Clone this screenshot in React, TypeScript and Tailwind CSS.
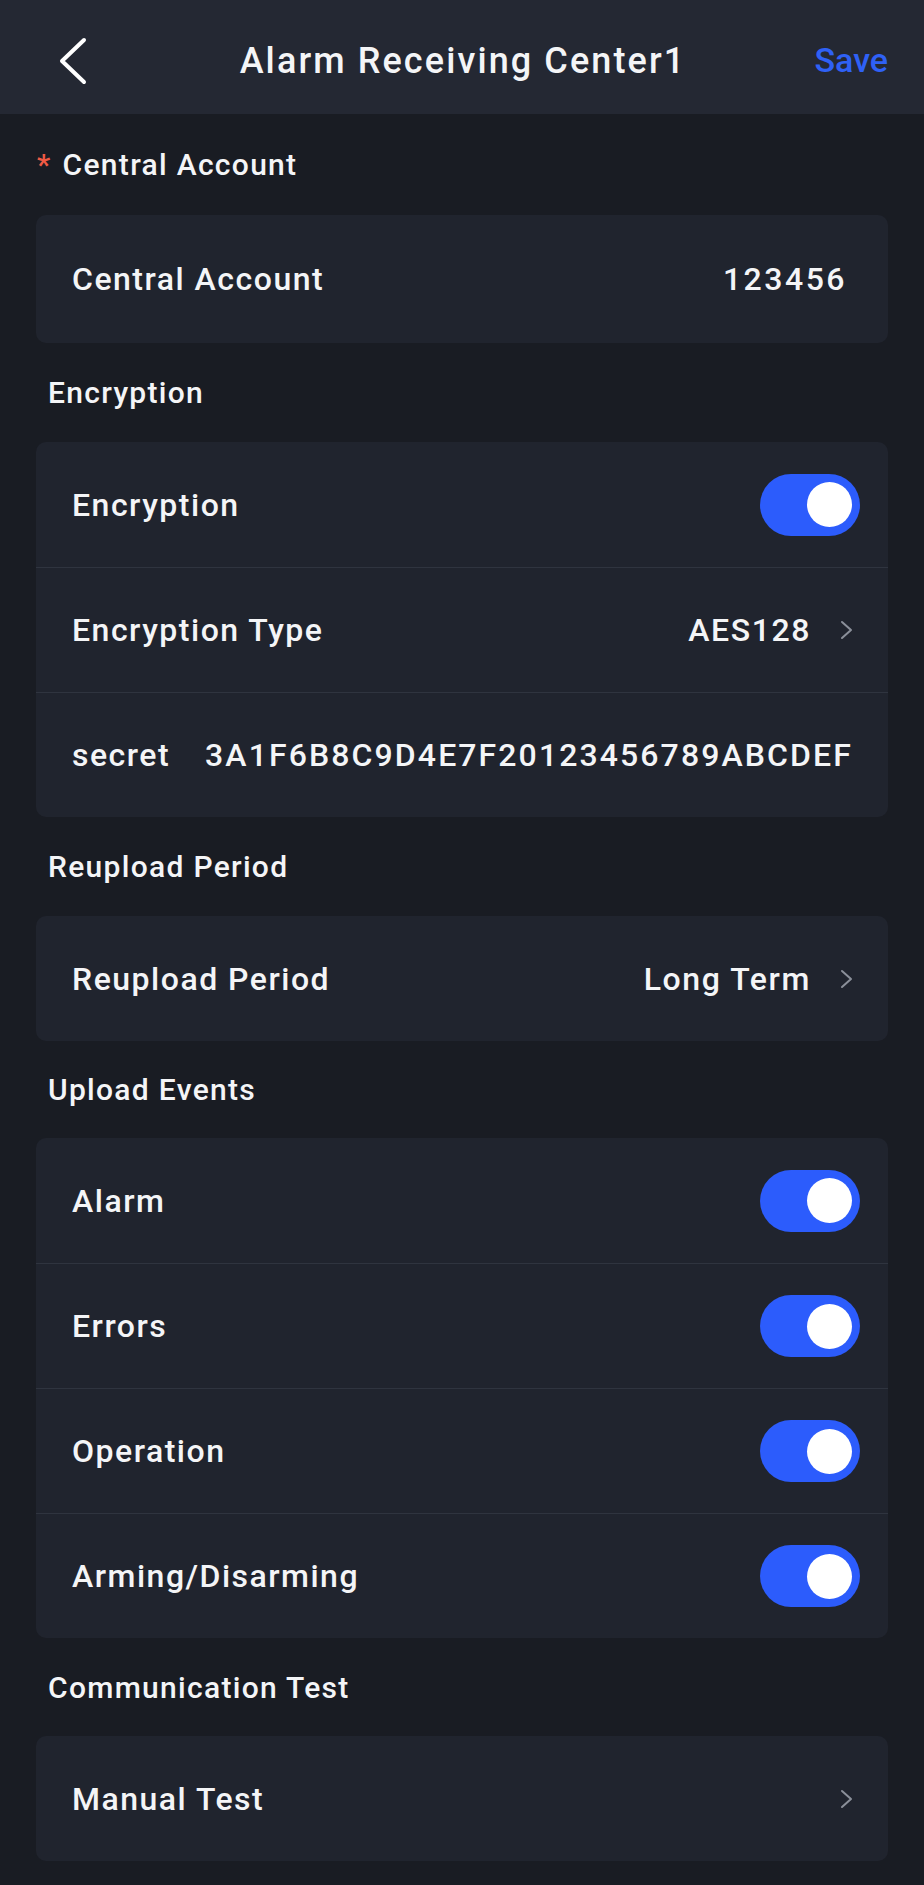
import React from "react";

type Row =
    | { kind: "text"; label: string; value: string }
    | { kind: "toggle"; label: string; on: boolean }
    | { kind: "link"; label: string; value?: string };

type Section = { title: string; required?: boolean; gap: string; rows: Row[] };

const sections: Section[] = [
    { title: "Central Account", required: true, gap: "h-[101px]", rows: [{ kind: "text", label: "Central Account", value: "123456" }] },
    {
        title: "Encryption",
        gap: "h-[99px]",
        rows: [
            { kind: "toggle", label: "Encryption", on: true },
            { kind: "link", label: "Encryption Type", value: "AES128" },
            { kind: "text", label: "secret", value: "3A1F6B8C9D4E7F20123456789ABCDEF" },
        ],
    },
    { title: "Reupload Period", gap: "h-[99px]", rows: [{ kind: "link", label: "Reupload Period", value: "Long Term" }] },
    {
        title: "Upload Events",
        gap: "h-[97px]",
        rows: [
            { kind: "toggle", label: "Alarm", on: true },
            { kind: "toggle", label: "Errors", on: true },
            { kind: "toggle", label: "Operation", on: true },
            { kind: "toggle", label: "Arming/Disarming", on: true },
        ],
    },
    { title: "Communication Test", gap: "h-[98px]", rows: [{ kind: "link", label: "Manual Test" }] },
];

function Toggle({ on }: { on: boolean }) {
    return (
        <div className={`flex h-[62px] w-[100px] items-center rounded-full pl-[9px] pr-[8px] ${on ? "justify-end bg-[#2c5cfc]" : "justify-start bg-[#3a3f4b]"}`}>
            <div className="h-[45px] w-[45px] rounded-full bg-white" />
        </div>
    );
}

function Chevron() {
    return (
        <svg width="14" height="20" viewBox="0 0 14 20" fill="none">
            <polyline points="2,2 11,10 2,18" stroke="#8a8f99" strokeWidth="2" strokeLinecap="round" strokeLinejoin="round" />
        </svg>
    );
}

function SettingRow({ row, first, tall }: { row: Row; first: boolean; tall: boolean }) {
    const base = `flex items-center justify-between pl-[36px] ${tall ? "h-[128px]" : "h-[125px]"} ${first ? "" : "border-t border-[#2f343f]"}`;
    const label = <span className="text-[32px] tracking-[1.5px]">{row.label}</span>;

    if (row.kind === "toggle") {
        return (
            <div className={`${base} pr-[28px]`}>
                {label}
                <Toggle on={row.on} />
            </div>
        );
    }

    if (row.kind === "link") {
        return (
            <div className={`${base} pr-[34px]`}>
                {label}
                <div className="flex items-center gap-[29px]">
                    {row.value && <span className="text-[32px] tracking-[1.6px]">{row.value}</span>}
                    <Chevron />
                </div>
            </div>
        );
    }

    const secret = row.label === "secret";
    return (
        <div className={`${base} ${secret ? "pr-[35px]" : "pr-[41px]"}`}>
            {label}
            <span className={`text-[32px] ${secret ? "tracking-[2.1px]" : "tracking-[2.5px]"}`}>{row.value}</span>
        </div>
    );
}

export default function App() {
    return (
        <div className="min-h-[1885px] w-[924px] bg-[#191c23] pb-[29px] font-['Roboto',sans-serif] font-medium text-[#f4f5f7]">
            <header className="grid h-[114px] grid-cols-[1fr_auto_1fr] items-center bg-[#242833] pt-[7px]">
                <div className="pl-[58px]">
                    <svg width="30" height="48" viewBox="0 0 30 48" fill="none">
                        <polyline points="26,3 4,24 26,45" stroke="#ffffff" strokeWidth="4" strokeLinecap="round" strokeLinejoin="round" />
                    </svg>
                </div>
                <h1 className="pl-[2px] text-[36px] tracking-[2.1px]">Alarm Receiving Center1</h1>
                <div className="justify-self-end pr-[36px] text-[34px] text-[#2f61f5]">Save</div>
            </header>

            <main className="px-[36px]">
                {sections.map((section, si) => (
                    <section key={section.title}>
                        <div className={`flex items-center pl-[12px] text-[30px] tracking-[1.3px] ${section.gap}`}>
                            {section.required && <span className="-ml-[11px] mr-[11px] text-[#ef5a44]">*</span>}
                            {section.title}
                        </div>
                        <div className="overflow-hidden rounded-[10px] bg-[#20242e]">
                            {section.rows.map((row, i) => (
                                <SettingRow key={row.label} row={row} first={i === 0} tall={si === 0} />
                            ))}
                        </div>
                    </section>
                ))}
            </main>
        </div>
    );
}
